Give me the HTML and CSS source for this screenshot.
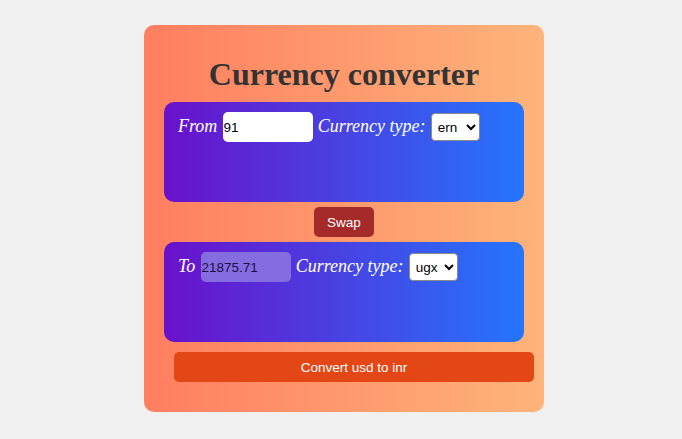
FILE: index.html
```html
<!DOCTYPE html>
<html lang="en">
<head>
<meta charset="utf-8">
<title>Currency converter</title>
<link rel="stylesheet" href="styles.css">
</head>
<body>
  <div class="card">
    <h1 class="title">Currency converter</h1>
    <div class="box">
      <label class="lbl">From</label>
      <input class="amount" type="text" value="91">
      <label class="lbl">Currency type:</label>
      <select class="cur"><option>ern</option></select>
    </div>
    <div class="swap-row"><button class="swap">Swap</button></div>
    <div class="box">
      <label class="lbl">To</label>
      <input class="amount result" type="text" value="21875.71" readonly>
      <label class="lbl">Currency type:</label>
      <select class="cur"><option>ugx</option></select>
    </div>
    <button class="convert">Convert usd to inr</button>
  </div>
</body>
</html>
```
FILE: styles.css
```css
html, body {
  margin: 0;
  background: #f0f0f0;
}
body {
  display: flex;
  justify-content: center;
  padding: 25px 0 0 6px;
  font-family: "Liberation Serif", serif;
}
.card {
  width: 400px;
  box-sizing: border-box;
  padding: 0 20px 20px;
  border-radius: 10px;
  background: linear-gradient(to right, #ff7e5f, #feb47b);
  display: flex;
  flex-direction: column;
}
.title {
  margin: 31px 0 10px;
  font-size: 32px;
  line-height: 36px;
  font-weight: bold;
  text-align: center;
  color: #333;
}
.box {
  height: 100px;
  box-sizing: border-box;
  padding: 10px 14px;
  border-radius: 10px;
  background: linear-gradient(to right, #6a11cb, #2575fc);
  display: flex;
  align-items: baseline;
  gap: 5.2px;
}
.lbl {
  font-style: italic;
  font-size: 18px;
  color: #fff;
}
.amount {
  width: 90px;
  height: 30px;
  box-sizing: border-box;
  border: none;
  border-radius: 5px;
  padding: 1px;
  background: #fff;
  color: #000;
  font: 13.5px "Liberation Sans", Arial, sans-serif;
  outline: none;
}
.result {
  background: #856ce0;
  color: #1c0f45;
}
.cur {
  width: 49px;
  height: 28px;
  box-sizing: border-box;
  border: 1px solid #8a8a8a;
  border-radius: 4px;
  background: #fff;
  color: #000;
  padding: 0 2px;
  font: 13.5px "Liberation Sans", Arial, sans-serif;
}
.swap-row {
  display: flex;
  justify-content: center;
  padding: 5px 0;
}
.swap {
  width: 60px;
  height: 30px;
  border: none;
  border-radius: 5px;
  background: #a52a2a;
  color: #fff;
  font: 13.5px "Liberation Sans", Arial, sans-serif;
}
.convert {
  width: 360px;
  height: 30px;
  margin: 10px 0 10px 10px;
  border: none;
  border-radius: 5px;
  background: #e44716;
  color: #fff;
  font: 13.5px "Liberation Sans", Arial, sans-serif;
}
```
